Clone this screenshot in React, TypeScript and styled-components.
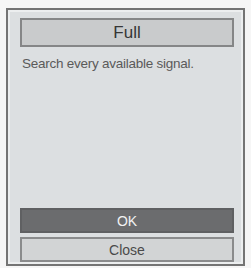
import React from "react";
import styled, { createGlobalStyle } from "styled-components";

const Global = createGlobalStyle`
  html, body { margin: 0; padding: 0; background: #f6f6f6; }
  body { font-family: "Liberation Sans", Arial, sans-serif; }
`;

const Page = styled.div`
  width: 251px;
  height: 268px;
  padding: 8px 0 0 6px;
  box-sizing: border-box;
`;

const Dialog = styled.div`
  width: 239px;
  height: 258px;
  box-sizing: border-box;
  border: 2px solid #747474;
  box-shadow: inset 0 0 0 2px #eceeef;
  background: #dcdfe1;
  padding: 8px 9px 2px 12px;
  display: flex;
  flex-direction: column;
`;

const Title = styled.div`
  height: 29px;
  box-sizing: border-box;
  border: 2px solid #858687;
  background: #c9cbcc;
  color: #363636;
  font-size: 17px;
  display: flex;
  align-items: center;
  justify-content: center;
`;

const Description = styled.p`
  margin: 9px 0 0 2px;
  font-size: 13.5px;
  letter-spacing: -0.25px;
  color: #5a5a5a;
  flex: 1;
`;

const Button = styled.button<{ $primary?: boolean }>`
  height: 25px;
  box-sizing: border-box;
  border: 2px solid ${(p) => (p.$primary ? "#5f6062" : "#8a8b8c")};
  background: ${(p) => (p.$primary ? "#6b6c6e" : "#d2d4d5")};
  color: ${(p) => (p.$primary ? "#f2f2f2" : "#4a4a4a")};
  font-family: inherit;
  font-size: 14px;
  display: flex;
  align-items: center;
  justify-content: center;
  padding: 0;
`;

const Buttons = styled.div`
  display: flex;
  flex-direction: column;
  gap: 4px;
`;

export default function App() {
  return (
    <>
      <Global />
      <Page>
        <Dialog>
          <Title>Full</Title>
          <Description>Search every available signal.</Description>
          <Buttons>
            <Button $primary>OK</Button>
            <Button>Close</Button>
          </Buttons>
        </Dialog>
      </Page>
    </>
  );
}
